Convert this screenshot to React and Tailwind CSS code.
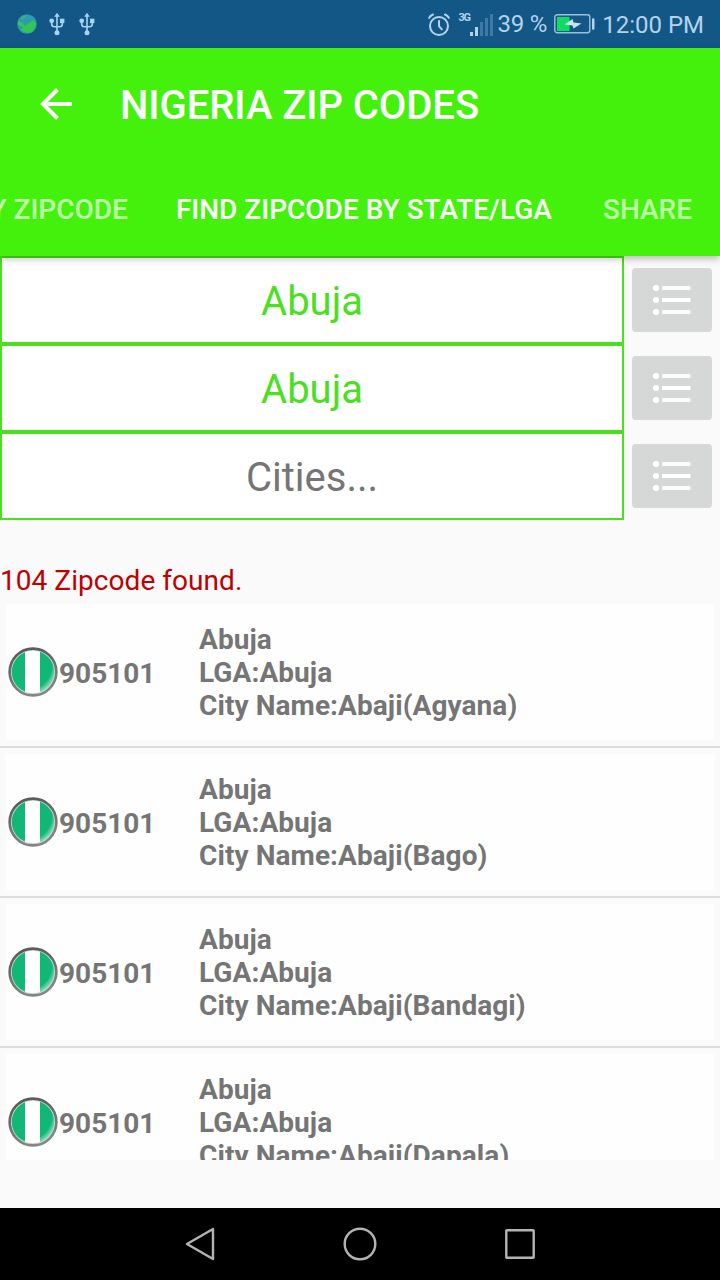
import React from 'react';

const fields = [
  { text: 'Abuja', selected: true },
  { text: 'Abuja', selected: true },
  { text: 'Cities...', selected: false },
];

const results = [
  { zip: '905101', state: 'Abuja', lga: 'Abuja', city: 'Abaji(Agyana)' },
  { zip: '905101', state: 'Abuja', lga: 'Abuja', city: 'Abaji(Bago)' },
  { zip: '905101', state: 'Abuja', lga: 'Abuja', city: 'Abaji(Bandagi)' },
  { zip: '905101', state: 'Abuja', lga: 'Abuja', city: 'Abaji(Dapala)' },
];

function GlobeIcon() {
  return (
    <svg className="w-5 h-5 shrink-0" viewBox="0 0 20 20">
      <circle cx="10" cy="10" r="9.8" fill="#2b9bb0" />
      <path d="M1 7 L5 8 L8 12 L16 6 L19 9 Q19 15 14 18.5 Q8 20 4 16 L6 13 L1 11Z" fill="#35c455" />
      <path d="M4 3 Q7 1 10 1 L8 4 L4 6Z" fill="#43ad78" />
    </svg>
  );
}

function UsbIcon() {
  return (
    <svg className="w-4 h-6 shrink-0" viewBox="0 0 16 24" fill="none" stroke="#a9d2f5" strokeWidth="1.6">
      <path d="M8 3 V21 M2.7 9 V12 Q2.7 14.7 5.5 14.7 H10.5 Q13.3 14.7 13.3 12 V9" />
      <path d="M8 0.8 L10.8 4.8 H5.2Z" fill="#a9d2f5" stroke="none" />
      <circle cx="2.7" cy="8.8" r="2.4" fill="#a9d2f5" stroke="none" />
      <rect x="11" y="6.7" width="4.4" height="4.4" fill="#a9d2f5" stroke="none" />
      <circle cx="8" cy="20.8" r="2.5" fill="#a9d2f5" stroke="none" />
    </svg>
  );
}

function AlarmIcon() {
  return (
    <svg className="w-[22px] h-[23px] shrink-0" viewBox="0 0 22 23" fill="none" stroke="#b4d2ec" strokeWidth="2" strokeLinecap="round">
      <circle cx="11" cy="13" r="9" />
      <path d="M11 8 V13.2 L13.8 16.3 M1.2 4.8 Q2.4 2.6 5 1.5 M20.8 4.8 Q19.6 2.6 17 1.5" />
    </svg>
  );
}

function SignalIcon() {
  return (
    <svg className="w-[23px] h-[22px] shrink-0" viewBox="0 0 23 22">
      <rect x="0" y="18" width="3" height="4" fill="#b4d2ec" />
      <rect x="5" y="13" width="3" height="9" fill="#b4d2ec" />
      <rect x="10" y="8" width="3" height="14" fill="#4179a6" />
      <rect x="15" y="4" width="3" height="18" fill="#4179a6" />
      <rect x="20" y="0" width="3" height="22" fill="#4179a6" />
    </svg>
  );
}

function BatteryIcon() {
  return (
    <svg className="w-[42px] h-5 shrink-0" viewBox="0 0 42 20">
      <rect x="0.8" y="0.8" width="35" height="18" rx="2.5" fill="none" stroke="#9dbfdc" strokeWidth="1.4" />
      <rect x="3" y="3" width="12.5" height="14" fill="#0fdc62" />
      <rect x="38" y="4.5" width="2.5" height="11" fill="#b4d2ec" />
      <path d="M10.5 10.5 L18.5 5 L19.5 8.5 L27.5 9.5 L19.5 14.5 L18.5 11.5Z" fill="#c9e3ee" />
    </svg>
  );
}

function ListIcon() {
  return (
    <svg className="w-[38px] h-8" viewBox="0 0 38 32" fill="#ffffff">
      <circle cx="3" cy="4" r="3.1" />
      <circle cx="3" cy="16" r="3.1" />
      <circle cx="3" cy="28" r="3.1" />
      <rect x="9" y="2" width="28.5" height="4" rx="1.5" />
      <rect x="9" y="14" width="28.5" height="4" />
      <rect x="9" y="26" width="28.5" height="4" rx="1.5" />
    </svg>
  );
}

function FlagIcon() {
  return (
    <svg className="w-[50px] h-[50px] shrink-0" viewBox="0 0 50 50">
      <defs>
        <clipPath id="flag-clip">
          <circle cx="25" cy="25" r="23" />
        </clipPath>
        <linearGradient id="flag-rim" x1="0" y1="0" x2="0.3" y2="1">
          <stop offset="0" stopColor="#555555" />
          <stop offset="1" stopColor="#858585" />
        </linearGradient>
        <radialGradient id="flag-shine" cx="0.4" cy="0.38" r="0.62">
          <stop offset="0.76" stopColor="#ffffff" stopOpacity="0" />
          <stop offset="1" stopColor="#ffffff" stopOpacity="0.75" />
        </radialGradient>
      </defs>
      <g clipPath="url(#flag-clip)">
        <rect width="50" height="50" fill="#10b777" />
        <rect x="17" width="15" height="50" fill="#ffffff" />
        <rect width="50" height="50" fill="url(#flag-shine)" />
      </g>
      <circle cx="25" cy="25" r="21.8" fill="none" stroke="#c4d8ce" strokeWidth="1.2" />
      <circle cx="25" cy="25" r="23.4" fill="none" stroke="url(#flag-rim)" strokeWidth="2.6" />
    </svg>
  );
}

function StatusBar() {
  return (
    <div className="h-12 shrink-0 bg-[#135787] flex items-center text-[#b4d2ec] whitespace-nowrap">
      <div className="flex items-center pl-[17px]">
        <GlobeIcon />
        <div className="flex gap-[14px] pl-3">
          <UsbIcon />
          <UsbIcon />
        </div>
      </div>
      <div className="flex items-center ml-auto pr-4">
        <AlarmIcon />
        <span className="ml-2 mb-3.5 w-[12px] text-[11px] leading-none font-bold tracking-[-1.2px]">3G</span>
        <div className="pt-[1px]"><SignalIcon /></div>
        <span className="ml-1 text-[24px] leading-none tracking-[-0.2px]">39 %</span>
        <div className="ml-[7px]"><BatteryIcon /></div>
        <span className="ml-[6px] pt-[2px] text-[24px] leading-none">12:00 PM</span>
      </div>
    </div>
  );
}

function Header() {
  return (
    <header className="relative z-10 shrink-0 bg-[#43f10c] text-white shadow-[0_3px_7px_rgba(0,0,0,0.25)]">
      <div className="h-28 flex items-center pl-10">
        <svg className="w-8 h-8 shrink-0" viewBox="0 0 32 32" fill="none" stroke="#ffffff" strokeWidth="4">
          <path d="M32 16 H3 M17.5 1.5 L3 16 L17.5 30.5" />
        </svg>
        <h1 className="ml-12 pt-[4px] text-[40px] leading-none font-medium tracking-[-0.08px] whitespace-nowrap">NIGERIA ZIP CODES</h1>
      </div>
      <nav className="h-24 pt-[3px] flex items-center justify-end pr-7 gap-[51px] overflow-hidden text-[28px] font-medium whitespace-nowrap">
        <span className="text-white/65 -mr-[3px]">FIND BY ZIPCODE</span>
        <span>FIND ZIPCODE BY STATE/LGA</span>
        <span className="text-white/65">SHARE</span>
      </nav>
    </header>
  );
}

function ResultRow({ item }) {
  return (
    <div className="h-[150px] shrink-0 border-b-2 border-[#dcdcdc] p-[6px]">
      <div className="h-[136px] bg-[#fefefe] flex items-center pl-[2px] text-[28px] leading-[33px] font-bold text-[#757575] whitespace-nowrap">
        <FlagIcon />
        <span className="w-[141px] pl-[1px] pt-[2px]">{item.zip}</span>
        <div className="pt-[1px] tracking-[0.08px]">
          <p>{item.state}</p>
          <p>LGA:{item.lga}</p>
          <p>City Name:{item.city}</p>
        </div>
      </div>
    </div>
  );
}

function NavBar() {
  return (
    <div className="h-[72px] shrink-0 bg-black flex items-center justify-center gap-[126px]">
      <svg className="w-8 h-9" viewBox="0 0 32 36" fill="none" stroke="#b3b3b3" strokeWidth="2.4" strokeLinejoin="round">
        <path d="M29 3 V33 L3 18Z" />
      </svg>
      <svg className="w-9 h-9" viewBox="0 0 36 36" fill="none" stroke="#b3b3b3" strokeWidth="2.4">
        <circle cx="18" cy="18" r="15.3" />
      </svg>
      <svg className="w-8 h-8" viewBox="0 0 32 32" fill="none" stroke="#b3b3b3" strokeWidth="2.4" strokeLinejoin="round">
        <rect x="2.3" y="2.3" width="27.4" height="27.4" rx="0.5" />
      </svg>
    </div>
  );
}

export default function App() {
  return (
    <div className="w-[720px] h-[1280px] flex flex-col overflow-hidden bg-[#fafafa] font-[Roboto,sans-serif]">
      <StatusBar />
      <Header />

      {/* State / LGA / city pickers */}
      <div className="shrink-0">
        {fields.map((field, i) => (
          <div key={i} className="h-[88px] flex items-center">
            <div
              className={`w-[624px] h-[88px] pt-[4px] bg-white border-2 border-[#4be01f] flex items-center justify-center text-[40px] ${field.selected ? 'text-[#4be01f]' : 'text-[#757575]'}`}
            >
              {field.text}
            </div>
            <button className="ml-2 w-20 h-16 rounded-[4px] bg-[#d6d7d7] flex items-center justify-center">
              <ListIcon />
            </button>
          </div>
        ))}
      </div>

      <p className="h-[78px] shrink-0 pt-[44px] text-[28px] leading-[33px] tracking-[0.05px] text-[#c00000]">104 Zipcode found.</p>

      <div className="h-[562px] shrink-0 flex flex-col overflow-hidden">
        {results.map((item, i) => (
          <ResultRow key={i} item={item} />
        ))}
      </div>

      <div className="flex-1" />
      <NavBar />
    </div>
  );
}
